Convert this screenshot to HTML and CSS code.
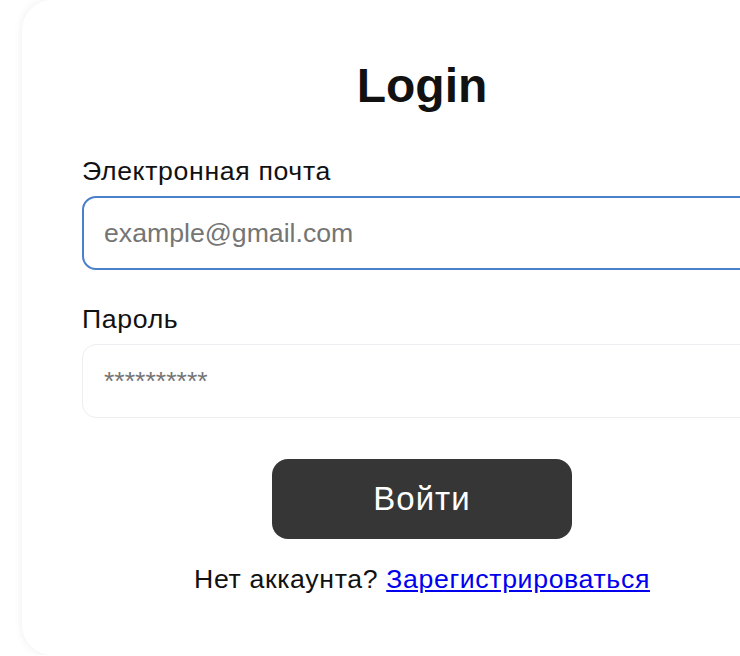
FILE: index.html
```html
<!DOCTYPE html>
<html lang="ru">
<head>
<meta charset="utf-8">
<title>Login</title>
<link rel="stylesheet" href="styles.css">
</head>
<body>
  <main class="card">
    <h1 class="title">Login</h1>
    <form class="form">
      <label class="label" for="email">Электронная почта</label>
      <input class="field field-focus" id="email" type="email" placeholder="example@gmail.com">
      <label class="label label-second" for="password">Пароль</label>
      <input class="field" id="password" type="password" placeholder="**********">
      <div class="actions">
        <button class="btn" type="button">Войти</button>
      </div>
      <p class="register">Нет аккаунта? <a href="#" class="link">Зарегистрироваться</a></p>
    </form>
  </main>
</body>
</html>
```
FILE: styles.css
```css
html, body {
  margin: 0;
  padding: 0;
  overflow: hidden;
  background: #ffffff;
  font-family: "Liberation Sans", Arial, sans-serif;
}

.card {
  box-sizing: border-box;
  margin-left: 22px;
  width: 800px;
  height: 655px;
  padding: 58px 60px 0 60px;
  background: #ffffff;
  border-radius: 30px;
  box-shadow: 0 0 10px rgba(0, 0, 0, 0.07);
}

.title {
  margin: 0;
  text-align: center;
  font-size: 48px;
  line-height: 56px;
  font-weight: 700;
  color: #111111;
}

.form {
  display: flex;
  flex-direction: column;
  margin-top: 41px;
}

.label {
  font-size: 26.67px;
  line-height: 32px;
  letter-spacing: 0.65px;
  color: #111111;
  margin-bottom: 9px;
}

.label-second {
  margin-top: 33px;
}

.field {
  box-sizing: border-box;
  width: 100%;
  height: 74px;
  margin: 0;
  padding: 0 21px;
  border: 1px solid #eceef2;
  border-radius: 14px;
  font-family: "Liberation Sans", Arial, sans-serif;
  font-size: 26.67px;
  color: #111111;
  background: #ffffff;
  outline: none;
}

.field::placeholder {
  color: #757575;
}

.field-focus {
  border: 2px solid #4a7fcc;
  padding: 0 20px;
}

.actions {
  display: flex;
  justify-content: center;
  margin-top: 41px;
}

.btn {
  width: 300px;
  height: 80px;
  border: none;
  border-radius: 16px;
  background: #363636;
  color: #ffffff;
  font-family: "Liberation Sans", Arial, sans-serif;
  font-size: 33px;
  letter-spacing: 1px;
  cursor: pointer;
}

.register {
  margin: 24px 0 0 0;
  text-align: center;
  font-size: 26.67px;
  line-height: 32px;
  letter-spacing: 0.65px;
  color: #111111;
}

.link {
  color: #0000ee;
  text-decoration: underline;
}
```
